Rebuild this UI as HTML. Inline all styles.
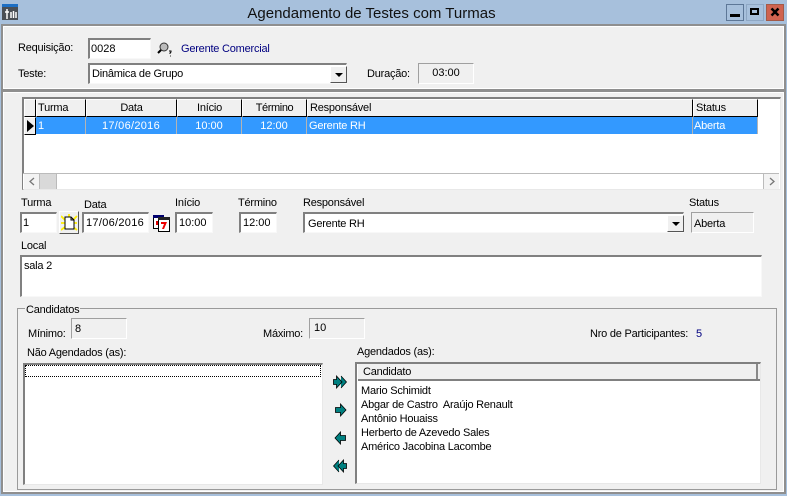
<!DOCTYPE html>
<html><head><meta charset="utf-8"><style>
html,body{margin:0;padding:0}
body{width:787px;height:496px;overflow:hidden;position:relative;background:#a7c0dc;font:11px/14px "Liberation Sans",sans-serif;letter-spacing:-.22px;color:#000}
div,span,svg{position:absolute;box-sizing:border-box}
.t{white-space:nowrap;height:14px}
.panel{background:#f0f0f0;border:1px solid #fff;outline:2px solid #8f8f8f;outline-offset:0}
.in{background:#fff;border-top:2px solid #808080;border-left:2px solid #808080;border-right:1px solid #f8f8f8;border-bottom:1px solid #f8f8f8;white-space:nowrap;line-height:19px;padding-left:2px}
.ro{background:#f0f0f0;border-top:1px solid #a0a0a0;border-left:1px solid #a0a0a0;border-right:1px solid #fff;border-bottom:1px solid #fff;white-space:nowrap}
.h{background:#f0f0f0;border-right:1px solid #000;border-bottom:1px solid #000;border-top:1px solid #fff;border-left:1px solid #fff;line-height:17px;white-space:nowrap}
.c{border-right:1px solid #b4b4b4;color:#fff;line-height:19px;white-space:nowrap;top:117px;height:17px}
.dd{background:#f0f0f0;border:1px solid;border-color:#fff #555 #555 #fff;width:17px;height:17px}
.n{letter-spacing:.3px}
.z{letter-spacing:0}
</style></head><body>
<svg style="left:2px;top:4px" width="16" height="17" viewBox="0 0 16 17"><rect width="16" height="16" y="0" fill="#4a4f55"/><rect width="16" height="3" fill="#1d6fc4"/><path d="M5 5v10M3 8h4M9 8v6M11.500 7v7M14 8v6" stroke="#fff" stroke-width="1.500" fill="none"/></svg>
<div class="t z" style="left:0;width:743px;top:5px;text-align:center;font-size:15px;line-height:18px;color:#111">Agendamento de Testes com Turmas</div>
<div style="left:726px;top:4px;width:18px;height:17px;border:1px solid #5d7797;background:#a7c0dc"><div style="left:3px;top:9px;width:10px;height:3px;background:#000"></div></div>
<div style="left:746px;top:4px;width:18px;height:17px;border:1px solid #8ea7c4;background:#a7c0dc"><div style="left:3px;top:3px;width:9px;height:7px;border:2px solid #000;border-top-width:2px"></div></div>
<div style="left:766px;top:4px;width:18px;height:17px;border:1px solid #a35a48;background:#cf6350"><svg style="left:3px;top:2px" width="11" height="11"><path d="M1.500 1.500l7 7M8.500 1.500l-7 7" stroke="#000" stroke-width="2.500"/></svg></div>

<div class="panel" style="left:3px;top:26px;width:781px;height:63px"></div>
<div class="t" style="left:18px;top:41px">Requisição:</div>
<div class="in z" style="left:88px;top:38px;width:63px;height:21px;padding-left:1px;line-height:18px">0028</div>
<svg style="left:157px;top:41px" width="16" height="16" viewBox="0 0 16 16"><circle cx="7" cy="6" r="4" fill="#bbb" stroke="#333"/><path d="M4 9l-3 3" stroke="#000" stroke-width="2"/><path d="M12 10h2v1l-1 1v1M13 15h.8" stroke="#000" fill="none"/></svg>
<div class="t" style="left:181px;top:42px;color:#000080">Gerente Comercial</div>
<div class="t" style="left:18px;top:67px">Teste:</div>
<div class="in" style="left:88px;top:63px;width:259px;height:21px;padding-left:2px;line-height:18px">Dinâmica de Grupo<div class="dd" style="left:240px;top:1px"><svg style="left:4px;top:6px" width="9" height="5"><path d="M0 0h8l-4 4z"/></svg></div></div>
<div class="t" style="left:367px;top:67px">Duração:</div>
<div class="ro z" style="left:418px;top:63px;width:56px;height:21px;text-align:center;line-height:19px">03:00</div>

<div class="panel" style="left:3px;top:92px;width:781px;height:400px"></div>
<!-- grid -->
<div style="left:22px;top:97px;width:759px;height:93px;background:#fff;border-top:2px solid #808080;border-left:2px solid #808080;border-right:1px solid #e8e8e8;border-bottom:1px solid #e8e8e8"></div>
<div class="h" style="left:24px;top:99px;width:12px;height:18px"></div>
<div class="h" style="left:36px;top:99px;width:50px;height:18px;padding-left:1px">Turma</div>
<div class="h" style="left:86px;top:99px;width:91px;height:18px;text-align:center">Data</div>
<div class="h" style="left:177px;top:99px;width:65px;height:18px;text-align:center">Início</div>
<div class="h" style="left:242px;top:99px;width:65px;height:18px;text-align:center;letter-spacing:-.4px">Término</div>
<div class="h" style="left:307px;top:99px;width:386px;height:18px;padding-left:2px">Responsável</div>
<div class="h" style="left:693px;top:99px;width:65px;height:18px;padding-left:2px">Status</div>
<div class="h" style="left:24px;top:117px;width:12px;height:18px"><svg style="left:1px;top:2px" width="8" height="12"><path d="M1 0l7 6-7 6z"/></svg></div>
<div style="left:36px;top:117px;width:722px;height:17px;background:#3399ff"></div>
<div class="c" style="left:36px;width:50px;padding-left:2px">1</div>
<div class="c n" style="left:86px;width:91px;text-align:center">17/06/2016</div>
<div class="c z" style="left:177px;width:65px;text-align:center">10:00</div>
<div class="c z" style="left:242px;width:65px;text-align:center">12:00</div>
<div class="c" style="left:307px;width:386px;padding-left:2px">Gerente RH</div>
<div class="c" style="left:693px;width:65px;padding-left:1px">Aberta</div>
<div style="left:23px;top:173px;width:756px;height:16px;background:#fff;border-top:1px solid #bbb"></div>
<div style="left:24px;top:174px;width:16px;height:15px;background:#f3f3f3;border-right:1px solid #bbb"><svg style="left:4px;top:3px" width="8" height="9"><path d="M6 1L2 4.500l4 3.500" fill="none" stroke="#777" stroke-width="1.300"/></svg></div>
<div style="left:40px;top:174px;width:17px;height:15px;background:#d9d9d9;border-right:1px solid #bbb"></div>
<div style="left:763px;top:174px;width:16px;height:15px;background:#f3f3f3;border-left:1px solid #bbb"><svg style="left:4px;top:3px" width="8" height="9"><path d="M2 1l4 3.500L2 8" fill="none" stroke="#777" stroke-width="1.300"/></svg></div>
<!-- form -->
<div class="t" style="left:21px;top:196px">Turma</div>
<div class="t" style="left:84px;top:198px">Data</div>
<div class="t" style="left:175px;top:196px">Início</div>
<div class="t" style="left:238px;top:196px">Término</div>
<div class="t" style="left:303px;top:196px">Responsável</div>
<div class="t" style="left:689px;top:196px">Status</div>
<div class="in" style="left:20px;top:212px;width:37px;height:21px;padding-left:1px">1</div>
<div style="left:59px;top:211px;width:20px;height:23px;background:#f0f0f0;border:1px solid;border-color:#fff #555 #555 #fff"><svg style="left:1px;top:2px" width="17" height="18" viewBox="0 0 17 18"><path d="M0 2l4 4M16 2l-4 4M0 16l4-3M16 16l-4-3M8 0v3M0 9h4M16 9h-3" stroke="#ffee00" stroke-width="1.800"/><path d="M4 3h6l3 3v9H4zM10 3v3h3" fill="#fff" stroke="#000"/></svg></div>
<div class="in n" style="left:82px;top:212px;width:67px;height:21px">17/06/2016</div>
<svg style="left:153px;top:215px" width="17" height="17" viewBox="0 0 17 17"><rect x="0.500" y="0.500" width="10" height="13" fill="#fff" stroke="#000"/><rect x="0" y="0" width="11" height="3" fill="#00006e"/><path d="M3 6h4v4H3z" fill="#d00"/><rect x="5.500" y="3.500" width="11" height="13" fill="#fff" stroke="#000"/><rect x="5" y="2" width="12" height="3" fill="#222"/><path d="M8 7h6l-3 7h-2l2-5H8z" fill="#e00"/></svg>
<div class="in z" style="left:175px;top:212px;width:38px;height:21px">10:00</div>
<div class="in z" style="left:239px;top:212px;width:38px;height:21px">12:00</div>
<div class="in" style="left:303px;top:212px;width:381px;height:21px;padding-left:3px;line-height:20px">Gerente RH<div class="dd" style="left:362px;top:1px"><svg style="left:4px;top:6px" width="9" height="5"><path d="M0 0h8l-4 4z"/></svg></div></div>
<div class="ro" style="left:691px;top:212px;width:63px;height:21px;padding-left:2px;line-height:22px">Aberta</div>
<div class="t" style="left:21px;top:239px">Local</div>
<div class="in" style="left:20px;top:255px;width:742px;height:42px;line-height:18px;padding-left:2px">sala 2</div>
<!-- group -->
<div style="left:17px;top:308px;width:760px;height:182px;border:1px solid #9a9a9a"></div>
<div class="t" style="left:25px;top:303px;background:#f0f0f0;padding:0 1px">Candidatos</div>
<div class="t" style="left:28px;top:327px">Mínimo:</div>
<div class="ro" style="left:71px;top:318px;width:56px;height:21px;padding-left:3px;line-height:20px">8</div>
<div class="t" style="left:263px;top:327px">Máximo:</div>
<div class="ro z" style="left:309px;top:318px;width:56px;height:21px;padding-left:4px;line-height:19px">10</div>
<div class="t" style="left:590px;top:327px">Nro de Participantes:</div>
<div class="t" style="left:696px;top:327px;color:#000080">5</div>
<div class="t" style="left:27px;top:346px">Não Agendados (as):</div>
<div style="left:23px;top:363px;width:300px;height:122px;background:#fff;border-top:2px solid #808080;border-left:2px solid #808080;border-right:1px solid #e8e8e8;border-bottom:1px solid #e8e8e8"></div>
<div style="left:25px;top:365px;width:296px;height:12px;border:1px dotted #000"></div>
<div class="t" style="left:357px;top:345px">Agendados (as):</div>
<div style="left:355px;top:362px;width:406px;height:122px;background:#fff;border-top:2px solid #808080;border-left:2px solid #808080;border-right:1px solid #e8e8e8;border-bottom:1px solid #e8e8e8"></div>
<div style="left:358px;top:364px;width:402px;height:17px;background:#f0f0f0;border-bottom:2px solid #808080;padding-left:5px;line-height:17px">Candidato<div style="left:398px;top:0;width:2px;height:15px;background:#8a8a8a"></div></div>
<div class="t" style="left:361px;top:384px">Mario Schimidt</div>
<div class="t" style="left:361px;top:398px">Abgar de Castro&nbsp; Araújo Renault</div>
<div class="t" style="left:361px;top:412px">Antônio Houaiss</div>
<div class="t" style="left:361px;top:426px">Herberto de Azevedo Sales</div>
<div class="t" style="left:361px;top:440px">Américo Jacobina Lacombe</div>
<svg style="left:333px;top:375px" width="14" height="14" viewBox="0 0 14 14"><path d="M.5 4.500h3V1l5.500 6L3.500 13V9.500h-3zM8 1l5.500 6L8 13" fill="#008080" stroke="#000" stroke-width=".8"/></svg>
<svg style="left:335px;top:403px" width="12" height="14" viewBox="0 0 12 14"><path d="M.5 4.500h5V1l5.500 6-5.500 6V9.500h-5z" fill="#008080" stroke="#000" stroke-width=".8"/></svg>
<svg style="left:334px;top:431px" width="12" height="14" viewBox="0 0 12 14"><path d="M11.500 4.500h-5V1L1 7l5.500 6V9.500h5z" fill="#008080" stroke="#000" stroke-width=".8"/></svg>
<svg style="left:333px;top:459px" width="14" height="14" viewBox="0 0 14 14"><path d="M13.500 4.500h-3V1L5 7l5.500 6V9.500h3zM6 1L.5 7 6 13" fill="#008080" stroke="#000" stroke-width=".8"/></svg>
</body></html>
